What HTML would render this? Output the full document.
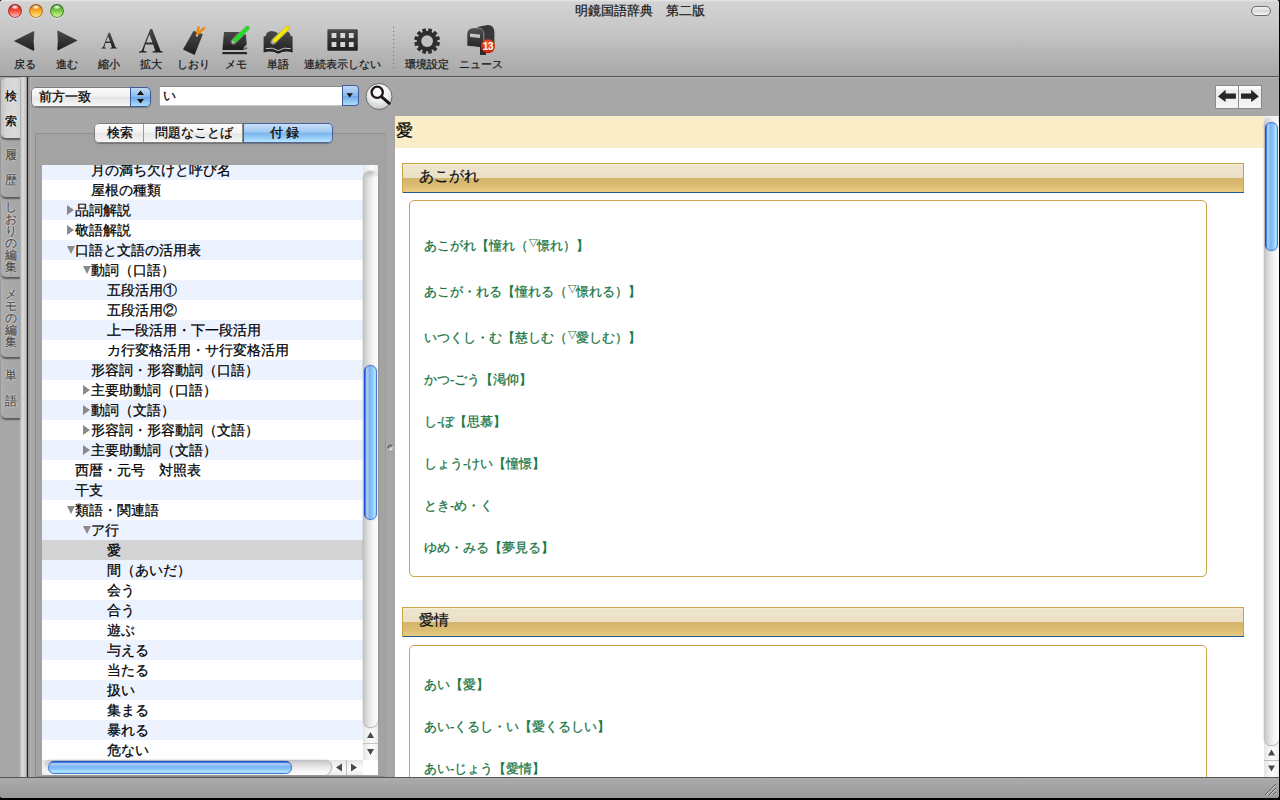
<!DOCTYPE html>
<html><head><meta charset="utf-8">
<style>
*{margin:0;padding:0;box-sizing:border-box}
html,body{width:1280px;height:800px;overflow:hidden;background:#000}
body{position:relative;font-family:"Liberation Sans",sans-serif;color:#000;-webkit-text-stroke:0.25px currentColor}
.a{position:absolute}
#win{position:absolute;left:0;top:0;width:1279px;height:798px;background:#a7a7a7;overflow:hidden;border-radius:3px 3px 3px 3px}
#tb{left:0;top:0;width:1279px;height:76px;background:linear-gradient(#e8e8e8 0px,#d3d3d3 2px,#c7c7c7 30px,#b5b5b5 55px,#a8a8a8 76px)}
#tbline{left:0;top:76px;width:1279px;height:1px;background:#525252}
#title{left:0;top:3px;width:1279px;text-align:center;font-size:13px;line-height:16px;color:#1a1a1a}
.light{width:14px;height:14px;border-radius:50%}
.tlab{top:57px;font-size:11px;line-height:14px;color:#1a1a1a;white-space:nowrap}
#bot{left:0;top:777px;width:1279px;height:21px;background:linear-gradient(#545454 0,#545454 1px,#ababab 1px,#9a9a9a 21px)}
.vt{left:1px;font-size:12px;line-height:12.1px;color:#4a4a4a;text-shadow:0 0 1px #e4e4e4,0 0 1px #e4e4e4,0 0 2px #dcdcdc,0 0 2px #dcdcdc;width:19px;text-align:center}
.tab{position:absolute;left:1px;width:19px;border-radius:5px 0 0 5px;background:linear-gradient(90deg,#b0b0b0,#a9a9a9 20%,#a6a6a6);box-shadow:0 1.5px 1.5px rgba(0,0,0,.45)}
.row{position:absolute;left:0;width:321px;height:20px;font-size:14px;line-height:20px;white-space:nowrap}
.b{background:#edf3fe}
.tri{position:absolute;top:5px;width:0;height:0}
.ent{position:absolute;left:14px;font-size:13px;line-height:18px;color:#16743f;white-space:nowrap;margin-top:-1px}
.ent sup{font-size:10.5px;vertical-align:4px;line-height:0;-webkit-text-stroke:0;margin:0 0.5px}
.shdr{position:absolute;left:7px;width:842px;height:30px;border:1px solid #c9a347;border-bottom:none;
 background:linear-gradient(#f6eed0 0,#f6eed0 1px,#efe5cf 1px,#ebdfc5 14px,#d3b46c 14px,#dcbd72 22px,#e9cb83 28px);}
.shdr::after{content:"";position:absolute;left:0;right:-1px;bottom:0;height:1px;background:#1c5796}
.shdr span{position:absolute;left:16px;top:3px;font-size:15px;line-height:18px;color:#111}
.box{position:absolute;left:14px;width:798px;border:1px solid #c9a347;border-radius:5px;background:#fff}
.row span{position:absolute;top:0}
.sel{background:#d4d4d4}
.tr{position:absolute;top:5px;width:0;height:0;border-left:7.5px solid #8a8a8a;border-top:5px solid transparent;border-bottom:5px solid transparent}
.td{position:absolute;top:5.5px;width:0;height:0;border-top:8.5px solid #8a8a8a;border-left:4.5px solid transparent;border-right:4.5px solid transparent}
</style></head><body>
<div id="win">
 <div class="a" id="tb"></div>
 <div class="a" id="tbline"></div>
 <div class="a" id="title">明鏡国語辞典　第二版</div>
 <!-- traffic lights -->
 <div class="a light" style="left:8px;top:4px;background:radial-gradient(ellipse 4px 2.5px at 50% 22%,#fff 0,rgba(255,255,255,.6) 50%,rgba(255,255,255,0) 100%),linear-gradient(#b83024 0%,#ee3a2c 38%,#fb6a60 62%,#ffb0b0 88%,#ffc4c4 100%);box-shadow:inset 0 0 0 1px rgba(120,30,30,.75),0 1px 0 rgba(255,255,255,.5)"></div>
 <div class="a light" style="left:29px;top:4px;background:radial-gradient(ellipse 4px 2.5px at 50% 22%,#fff 0,rgba(255,255,255,.6) 50%,rgba(255,255,255,0) 100%),linear-gradient(#c0640c 0%,#f49a18 38%,#fbbc40 62%,#ffe088 88%,#fff0b0 100%);box-shadow:inset 0 0 0 1px rgba(140,80,20,.75),0 1px 0 rgba(255,255,255,.5)"></div>
 <div class="a light" style="left:50px;top:4px;background:radial-gradient(ellipse 4px 2.5px at 50% 22%,#fff 0,rgba(255,255,255,.6) 50%,rgba(255,255,255,0) 100%),linear-gradient(#3c8a1e 0%,#6cbc3c 38%,#94d860 62%,#c8f098 88%,#e0f8c0 100%);box-shadow:inset 0 0 0 1px rgba(40,90,30,.75),0 1px 0 rgba(255,255,255,.5)"></div>
 <!-- pill -->
 <div class="a" style="left:1251px;top:6px;width:20px;height:10px;border:1px solid #6c6c6c;border-radius:5px;background:linear-gradient(#f5f5f5,#d8d8d8 50%,#f4f4f4)"></div>

 <svg class="a" style="left:0;top:0" width="520" height="76" viewBox="0 0 520 76">
  <defs>
   <linearGradient id="dk" x1="0" y1="0" x2="0" y2="1"><stop offset="0" stop-color="#4a4a4a"/><stop offset="1" stop-color="#1e1e1e"/></linearGradient>
   <linearGradient id="dk2" x1="0" y1="0" x2="0" y2="1"><stop offset="0" stop-color="#505050"/><stop offset="1" stop-color="#262626"/></linearGradient>
   <radialGradient id="badge" cx="0.5" cy="0.35" r="0.6"><stop offset="0" stop-color="#f26a3a"/><stop offset="1" stop-color="#c81e08"/></radialGradient>
  </defs>
  <!-- back -->
  <path d="M13.5 41 L33 31.2 Q34.5 30.6 34.4 32.2 Q33.2 41 34.4 49.8 Q34.5 51.4 33 50.8 Z" fill="url(#dk)" stroke="#f0f0f0" stroke-opacity="0.35" stroke-width="0.6"/>
  <!-- fwd -->
  <path d="M78 40.5 L58.5 30.7 Q57 30.1 57.1 31.7 Q58.3 40.5 57.1 49.3 Q57 50.9 58.5 50.3 Z" fill="url(#dk)" stroke="#f0f0f0" stroke-opacity="0.35" stroke-width="0.6"/>
  <!-- A small / large -->
  <path id="bigA" fill-rule="evenodd" fill="url(#dk)" d="M150.2 29 L152.2 29 L160.6 51.1 Q162.8 51.3 162.8 52.1 L162.8 52.6 L152.4 52.6 L152.4 52.1 Q152.4 51.3 155.2 51.1 L153.2 44.6 L145.4 44.6 L143.6 51.1 Q146.6 51.3 146.6 52.1 L146.6 52.6 L139 52.6 L139 52.1 Q139 51.3 141.6 51.1 Z M149.4 34.6 L152.5 42.4 L146.2 42.4 Z"/>
  <use href="#bigA" transform="translate(101.2 32.7) scale(0.665) translate(-139 -29)"/>
  <!-- bookmark -->
  <path d="M193.6 30.7 L202.8 34.2 L194.6 55 L183 49.4 Z" fill="url(#dk)"/>
  <circle cx="197" cy="35.6" r="1.1" fill="#d8d8d8"/>
  <path d="M198.7 26.4 L197.4 34 L204.9 27.6" fill="none" stroke="#f08a14" stroke-width="2.6" stroke-linejoin="round"/>
  <!-- memo -->
  <path d="M224 32 L240 32 L246 34.8 L247 50 L222.4 50 Z" fill="url(#dk)"/>
  <path d="M243 50 Q244 45.5 247 44.5 L247.2 50 Z" fill="#a8a8a8"/>
  <path d="M243 50 Q245 48 247.2 48" fill="none" stroke="#2a2a2a" stroke-width="0.8"/>
  <rect x="222.4" y="52" width="24.6" height="2.2" fill="#262626"/>
  <path d="M233.58 41.64 L247.19 28.20" stroke="#a8a8a8" stroke-opacity="0.6" stroke-width="5.7" stroke-linecap="round"/><path d="M231.80 43.40 L235.30 42.68 L232.56 39.90 Z" fill="#bdbdbd"/><path d="M235.30 42.68 L247.70 30.43 L244.96 27.66 L232.56 39.90 Z" fill="#1ee01e"/><circle cx="247.33" cy="28.06" r="2.05" fill="#22d822"/>
  <!-- book -->
  <path d="M263.6 36.5 L265.8 36 Q266 31.5 271.5 31 Q276 31 278.2 33.5 Q280.5 31 285 31 Q290.5 31.5 290.6 36 L292.6 36.5 L292.6 52.6 Q285 49.8 278.2 53.7 Q271.4 49.8 263.6 52.6 Z" fill="url(#dk)"/>
  <path d="M265.8 48.6 Q272.5 46.8 278.2 50.6 Q284 46.8 290.6 48.6" fill="none" stroke="#c4c4c4" stroke-width="1"/>
  <path d="M273.19 41.86 L287.48 28.00" stroke="#a8a8a8" stroke-opacity="0.6" stroke-width="5.7" stroke-linecap="round"/><path d="M271.40 43.60 L274.91 42.91 L272.20 40.11 Z" fill="#bdbdbd"/><path d="M274.91 42.91 L287.98 30.23 L285.26 27.43 L272.20 40.11 Z" fill="#f4e800"/><circle cx="287.63" cy="27.86" r="2.05" fill="#eede00"/>
  <!-- grid -->
  <rect x="327.4" y="29.2" width="30.4" height="21.6" rx="1" fill="url(#dk)"/>
  <g fill="#d6d6d6">
   <rect x="331.6" y="33" width="4.8" height="5"/><rect x="340.3" y="33" width="4.8" height="5"/><rect x="348.9" y="33" width="4.8" height="5"/>
   <rect x="331.6" y="42" width="4.8" height="5"/><rect x="340.3" y="42" width="4.8" height="5"/><rect x="348.9" y="42" width="4.8" height="5"/>
  </g>
  <!-- separator -->
  <line x1="393.6" y1="27" x2="393.6" y2="70" stroke="#6a6a6a" stroke-width="1" stroke-dasharray="1 3"/>
  <!-- gear -->
  <g transform="translate(427.1 41.1)" fill="#2e2e2e">
   <circle r="10.2"/>
   <g id="teeth">
    <rect x="-1.9" y="-12.9" width="3.8" height="4" transform="rotate(15)"/>
    <rect x="-1.9" y="-12.9" width="3.8" height="4" transform="rotate(45)"/>
    <rect x="-1.9" y="-12.9" width="3.8" height="4" transform="rotate(75)"/>
    <rect x="-1.9" y="-12.9" width="3.8" height="4" transform="rotate(105)"/>
    <rect x="-1.9" y="-12.9" width="3.8" height="4" transform="rotate(135)"/>
    <rect x="-1.9" y="-12.9" width="3.8" height="4" transform="rotate(165)"/>
    <rect x="-1.9" y="-12.9" width="3.8" height="4" transform="rotate(195)"/>
    <rect x="-1.9" y="-12.9" width="3.8" height="4" transform="rotate(225)"/>
    <rect x="-1.9" y="-12.9" width="3.8" height="4" transform="rotate(255)"/>
    <rect x="-1.9" y="-12.9" width="3.8" height="4" transform="rotate(285)"/>
    <rect x="-1.9" y="-12.9" width="3.8" height="4" transform="rotate(315)"/>
    <rect x="-1.9" y="-12.9" width="3.8" height="4" transform="rotate(345)"/>
   </g>
   <circle r="5.9" fill="#c2c2c2"/>
  </g>
  <!-- mailbox -->
  <path d="M477 27 L487.5 25 Q494.4 24.8 494.4 32.5 L494.4 45.5 L483 47.6 Z" fill="#383838"/>
  <path d="M467.3 45.8 L467.3 34 Q467.3 28.2 474.8 28 Q482.6 28 482.8 34 L482.8 47.6 Z" fill="url(#dk2)"/>
  <path d="M476.5 27.6 Q483.6 27.8 483.9 34 L483.9 47.4" fill="none" stroke="#9c9c9c" stroke-width="0.9"/>
  <path d="M467.6 46.2 L482.6 47.9" stroke="#b4b4b4" stroke-width="0.8"/>
  <path d="M470 33.6 L480 34.6 L480 37.9 L470 36.9 Z" fill="#c4c4c4"/>
  <rect x="480" y="47" width="6" height="8" fill="#2a2a2a"/>
  <circle cx="488" cy="46.2" r="7" fill="url(#badge)"/>
  <text x="488" y="50" text-anchor="middle" font-family="Liberation Sans" font-weight="bold" font-size="10" fill="#fff" letter-spacing="-0.3" style="-webkit-text-stroke:0.2px #fff">13</text>
 </svg>
 <div class="a tlab" style="left:24.5px;transform:translateX(-50%)">戻る</div>
 <div class="a tlab" style="left:66.5px;transform:translateX(-50%)">進む</div>
 <div class="a tlab" style="left:109px;transform:translateX(-50%)">縮小</div>
 <div class="a tlab" style="left:150.7px;transform:translateX(-50%)">拡大</div>
 <div class="a tlab" style="left:193.4px;transform:translateX(-50%)">しおり</div>
 <div class="a tlab" style="left:236px;transform:translateX(-50%)">メモ</div>
 <div class="a tlab" style="left:278px;transform:translateX(-50%)">単語</div>
 <div class="a tlab" style="left:342px;transform:translateX(-50%)">連続表示しない</div>
 <div class="a tlab" style="left:427px;transform:translateX(-50%)">環境設定</div>
 <div class="a tlab" style="left:481px;transform:translateX(-50%)">ニュース</div>

 <!-- body -->
 <!-- vertical tabs -->
 <div class="a" style="left:20px;top:77px;width:7px;height:700px;background:linear-gradient(90deg,#bdbdbd,#dcdcdc 40%,#c4c4c4 80%,#8a8a8a)"></div>
 <div class="a" style="left:27px;top:77px;width:1px;height:700px;background:#1e1e1e"></div>
 <div class="a" style="left:28px;top:77px;width:2px;height:700px;background:#9c9c9c"></div>
 <div class="a" style="left:30px;top:77px;width:1px;height:700px;background:#b4b4b4"></div>
 <!-- tab shapes -->
 <div class="tab" style="top:358px;height:60px"></div>
 <div class="tab" style="top:278px;height:79px"></div>
 <div class="tab" style="top:198px;height:79px"></div>
 <div class="tab" style="top:138px;height:59px"></div>
 <div class="tab" style="top:78px;height:60px;border-radius:5px 0 0 5px;background:linear-gradient(90deg,#c4c4c4,#d6d6d6 30%,#dadada 70%,#d2d2d2)"></div>
 <div class="a vt" style="top:84px;color:#000;text-shadow:0 0 1px #fff,0 0 2px #fff,0 0 2px #fff;line-height:25px">検<br>索</div>
 <div class="a vt" style="top:142.5px;line-height:25.5px">履<br>歴</div>
 <div class="a vt" style="top:201px">し<br>お<br>り<br>の<br>編<br>集</div>
 <div class="a vt" style="top:287.8px">メ<br>モ<br>の<br>編<br>集</div>
 <div class="a vt" style="top:362px;line-height:26px">単<br>語</div>

 <!-- search row -->
 <div class="a" style="left:31px;top:87px;width:120px;height:20px;border-radius:5px;background:linear-gradient(#fdfdfd,#f1f1f1 45%,#e4e4e4 55%,#fafafa);box-shadow:0 0 0 1px #7c7c7c inset,0 1px 1px rgba(0,0,0,.25)"></div>
 <div class="a" style="left:130px;top:87px;width:21px;height:20px;border-radius:0 5px 5px 0;background:linear-gradient(#c8def6,#88b8ea 50%,#6aa6e6 52%,#b8e4ff);box-shadow:0 0 0 1px #3e5c9a inset"></div>
 <svg class="a" style="left:130px;top:87px" width="21" height="20"><path d="M7 8 L10.5 3.5 L14 8 Z M7 12 L14 12 L10.5 16.5 Z" fill="#111"/></svg>
 <div class="a" style="left:39px;top:88px;font-size:13px;line-height:18px">前方一致</div>

 <div class="a" style="left:159px;top:86px;width:184px;height:20px;background:#fff;box-shadow:inset 0 1px 0 #8a8a8a,inset 1px 0 0 #b0b0b0,inset 0 -1px 0 #c8c8c8"></div>
 <div class="a" style="left:342px;top:85px;width:17px;height:21px;border-radius:0 4px 4px 0;background:linear-gradient(#c8def6,#88b8ea 50%,#6aa6e6 52%,#b8e4ff);box-shadow:0 0 0 1px #3e5c9a inset"></div>
 <svg class="a" style="left:342px;top:85px" width="17" height="21"><path d="M4.6 8.2 L10.8 8.2 L7.7 12.5 Z" fill="#111"/></svg>
 <div class="a" style="left:163px;top:87px;font-size:13px;line-height:18px">い</div>
 <svg class="a" style="left:364px;top:82px" width="30" height="30">
  <defs><radialGradient id="sb" cx="0.5" cy="0.3" r="0.7"><stop offset="0" stop-color="#ffffff"/><stop offset="0.6" stop-color="#ececec"/><stop offset="1" stop-color="#c8c8c8"/></radialGradient></defs>
  <circle cx="15" cy="14.5" r="13" fill="url(#sb)" stroke="#6a6a6a" stroke-width="1"/>
  <circle cx="13.2" cy="10.3" r="5.6" fill="none" stroke="#1e1414" stroke-width="2.3"/>
  <path d="M17.4 14.6 L25.2 21.3" stroke="#1e1414" stroke-width="2.9" stroke-linecap="round"/>
 </svg>

 <!-- group box -->
 <div class="a" style="left:35px;top:133px;width:351px;height:644px;border:1px solid #8e8e8e;border-right-color:#999;border-radius:2px;background:#a3a3a3"></div>
 <!-- segmented -->
 <div class="a" style="left:94px;top:123px;width:239px;height:20px;border-radius:5px;background:linear-gradient(#fefefe,#f3f3f3 45%,#e6e6e6 55%,#f8f8f8);box-shadow:0 0 0 1px #808080 inset,0 1px 1px rgba(0,0,0,.3)"></div>
 <div class="a" style="left:243px;top:123px;width:90px;height:20px;border-radius:0 5px 5px 0;background:linear-gradient(#cfe4f8,#9ec8f2 45%,#7ab6ee 52%,#a8d8fc 85%,#c4ecff);box-shadow:0 0 0 1px #4a62a0 inset"></div>
 <div class="a" style="left:143px;top:124px;width:1px;height:18px;background:#9a9a9a"></div>
 <div class="a" style="left:242px;top:124px;width:1px;height:18px;background:#8a8a8a"></div>
 <div class="a" style="left:107px;top:124px;font-size:13px;line-height:18px">検索</div>
 <div class="a" style="left:155px;top:124px;font-size:13px;line-height:18px">問題なことば</div>
 <div class="a" style="left:270px;top:124px;font-size:13px;line-height:18px;letter-spacing:3px">付録</div>

 <!-- list -->
 <div class="a" id="list" style="left:42px;top:165px;width:336px;height:610px;background:#fff;overflow:hidden">
  <div class="a" style="left:0;top:-5px;width:321px;height:620px" id="rows">
<div class="row b" style="top:0px"><span style="left:49px">月の満ち欠けと呼び名</span></div>
<div class="row" style="top:20px"><span style="left:49px">屋根の種類</span></div>
<div class="row b" style="top:40px"><i class="tr" style="left:25px"></i><span style="left:33px">品詞解説</span></div>
<div class="row" style="top:60px"><i class="tr" style="left:25px"></i><span style="left:33px">敬語解説</span></div>
<div class="row b" style="top:80px"><i class="td" style="left:25px"></i><span style="left:33px">口語と文語の活用表</span></div>
<div class="row" style="top:100px"><i class="td" style="left:41px"></i><span style="left:49px">動詞（口語）</span></div>
<div class="row b" style="top:120px"><span style="left:65px">五段活用①</span></div>
<div class="row" style="top:140px"><span style="left:65px">五段活用②</span></div>
<div class="row b" style="top:160px"><span style="left:65px">上一段活用・下一段活用</span></div>
<div class="row" style="top:180px"><span style="left:65px">カ行変格活用・サ行変格活用</span></div>
<div class="row b" style="top:200px"><span style="left:49px">形容詞・形容動詞（口語）</span></div>
<div class="row" style="top:220px"><i class="tr" style="left:41px"></i><span style="left:49px">主要助動詞（口語）</span></div>
<div class="row b" style="top:240px"><i class="tr" style="left:41px"></i><span style="left:49px">動詞（文語）</span></div>
<div class="row" style="top:260px"><i class="tr" style="left:41px"></i><span style="left:49px">形容詞・形容動詞（文語）</span></div>
<div class="row b" style="top:280px"><i class="tr" style="left:41px"></i><span style="left:49px">主要助動詞（文語）</span></div>
<div class="row" style="top:300px"><span style="left:33px">西暦・元号　対照表</span></div>
<div class="row b" style="top:320px"><span style="left:33px">干支</span></div>
<div class="row" style="top:340px"><i class="td" style="left:25px"></i><span style="left:33px">類語・関連語</span></div>
<div class="row b" style="top:360px"><i class="td" style="left:41px"></i><span style="left:49px">ア行</span></div>
<div class="row sel" style="top:380px"><span style="left:65px">愛</span></div>
<div class="row b" style="top:400px"><span style="left:65px">間（あいだ）</span></div>
<div class="row" style="top:420px"><span style="left:65px">会う</span></div>
<div class="row b" style="top:440px"><span style="left:65px">合う</span></div>
<div class="row" style="top:460px"><span style="left:65px">遊ぶ</span></div>
<div class="row b" style="top:480px"><span style="left:65px">与える</span></div>
<div class="row" style="top:500px"><span style="left:65px">当たる</span></div>
<div class="row b" style="top:520px"><span style="left:65px">扱い</span></div>
<div class="row" style="top:540px"><span style="left:65px">集まる</span></div>
<div class="row b" style="top:560px"><span style="left:65px">暴れる</span></div>
<div class="row" style="top:580px"><span style="left:65px">危ない</span></div>

</div>
 </div>

 <!-- content -->
 <div class="a" id="content" style="left:395px;top:116px;width:869px;height:661px;background:#fff;overflow:hidden">
  <div class="a" style="left:0;top:0;width:869px;height:32px;background:#faeec8"></div>
  <div class="a" style="left:1px;top:2.5px;font-size:17px;line-height:24px;color:#000">愛</div>
  <div class="shdr" style="top:47px"><span>あこがれ</span></div>
  <div class="box" style="top:84px;height:377px">
   <div class="ent" style="top:37.0px">あこがれ【憧れ（<sup>▽</sup>憬れ）】</div>
   <div class="ent" style="top:83.0px">あこが・れる【憧れる（<sup>▽</sup>憬れる）】</div>
   <div class="ent" style="top:129.0px">いつくし・む【慈しむ（<sup>▽</sup>愛しむ）】</div>
   <div class="ent" style="top:171.0px">かつ-ごう【渇仰】</div>
   <div class="ent" style="top:213.0px">し-ぼ【思慕】</div>
   <div class="ent" style="top:255.0px">しょう-けい【憧憬】</div>
   <div class="ent" style="top:297.0px">とき-め・く</div>
   <div class="ent" style="top:339.0px">ゆめ・みる【夢見る】</div>
  </div>
  <div class="shdr" style="top:491px"><span>愛情</span></div>
  <div class="box" style="top:529px;height:300px">
   <div class="ent" style="top:30.5px">あい【愛】</div>
   <div class="ent" style="top:72.5px">あい-くるし・い【愛くるしい】</div>
   <div class="ent" style="top:114.5px">あい-じょう【愛情】</div>
  </div>
 </div>
 <!-- content scrollbar -->
 <div class="a" style="left:1264px;top:116px;width:15px;height:661px;background:linear-gradient(90deg,#e4e4e4,#f6f6f6 40%,#fbfbfb 60%,#ececec)"></div><div class="a" style="left:1264px;top:117px;width:15px;height:628px;border-radius:7.5px;background:linear-gradient(90deg,#bebebe,#cdcdcd 12%,#e4e4e4 40%,#f6f6f6 72%,#fcfcfc 100%);box-shadow:0 1px 1.5px rgba(0,0,0,.35)"></div>
 <div class="a" style="left:1265px;top:122px;width:13px;height:129px;border-radius:6.5px;background:linear-gradient(90deg,#1c58dc 0,#2a66e0 10%,#a6c6f0 16%,#a4c8f2 32%,#78b2f2 40%,#8cc8fc 65%,#b2eaff 85%,#7aa8d8 100%);box-shadow:0 0 1px rgba(0,0,0,.5),inset 0 0 0 1px rgba(24,70,200,.55)"></div>
 
 <div class="a" style="left:1264px;top:760px;width:15px;height:1px;background:#bcbcbc"></div>
 <svg class="a" style="left:1264px;top:748px" width="15" height="29"><path d="M4 7.5 L11 7.5 L7.5 1.5 Z M4 17.5 L11 17.5 L7.5 23.5 Z" fill="#4a4a4a"/></svg>
 <!-- nav buttons -->
 <div class="a" style="left:1215px;top:85px;width:47px;height:24px;background:#8a8a8a;border-radius:1px"></div>
 <div class="a" style="left:1216px;top:86px;width:22px;height:22px;background:linear-gradient(#fdfdfd,#fafafa 10%,#ececec 20%,#f2f2f2 80%,#f8f8f8)"></div>
 <div class="a" style="left:1239px;top:86px;width:22px;height:22px;background:linear-gradient(#fdfdfd,#fafafa 10%,#ececec 20%,#f2f2f2 80%,#f8f8f8)"></div>
 <svg class="a" style="left:1215px;top:85px" width="47" height="24">
  <path d="M3 11.5 L10.6 4.8 L10.6 8.4 L20.9 8.4 L20.9 13.7 L10.6 13.7 L10.6 17 Z" fill="#262626"/>
  <path d="M43.8 11.5 L36.2 4.8 L36.2 8.4 L26 8.4 L26 13.7 L36.2 13.7 L36.2 17 Z" fill="#262626"/>
 </svg>
 <!-- list scrollbars -->
 <div class="a" style="left:363px;top:165px;width:15px;height:595px;background:linear-gradient(90deg,#e4e4e4,#f6f6f6 40%,#fbfbfb 60%,#ececec)"></div><div class="a" style="left:363px;top:171px;width:15px;height:556px;border-radius:7.5px;background:radial-gradient(ellipse 9px 8px at 50% 0,rgba(0,0,0,.2),rgba(0,0,0,0) 100%),linear-gradient(90deg,#bebebe,#cdcdcd 12%,#e4e4e4 40%,#f6f6f6 72%,#fcfcfc 100%);box-shadow:0 1px 1.5px rgba(0,0,0,.35),0 -1px 1px rgba(0,0,0,.12)"></div>
 <div class="a" style="left:364px;top:365px;width:13px;height:155px;border-radius:6.5px;background:linear-gradient(90deg,#1c58dc 0,#2a66e0 10%,#a6c6f0 16%,#a4c8f2 32%,#78b2f2 40%,#8cc8fc 65%,#b2eaff 85%,#7aa8d8 100%);box-shadow:0 0 1px rgba(0,0,0,.5),inset 0 0 0 1px rgba(24,70,200,.55)"></div>
 
 <div class="a" style="left:363px;top:743px;width:15px;height:1px;background:#c4c4c4"></div>
 <svg class="a" style="left:363px;top:728px" width="15" height="32"><path d="M4 10 L11 10 L7.5 4 Z M4 21 L11 21 L7.5 27 Z" fill="#4a4a4a"/></svg>
 <div class="a" style="left:42px;top:760px;width:321px;height:15px;background:linear-gradient(#e4e4e4,#f6f6f6 40%,#fbfbfb 60%,#ececec)"></div><div class="a" style="left:43px;top:760px;width:288px;height:15px;border-radius:7.5px;background:linear-gradient(#bebebe,#cdcdcd 12%,#e4e4e4 40%,#f6f6f6 72%,#fcfcfc 100%);box-shadow:1px 0 1.5px rgba(0,0,0,.35)"></div>
 <div class="a" style="left:48px;top:761px;width:244px;height:13px;border-radius:6.5px;background:linear-gradient(#1c58dc 0,#2a66e0 10%,#a6c6f0 16%,#a4c8f2 32%,#78b2f2 40%,#8cc8fc 65%,#b2eaff 85%,#7aa8d8 100%);box-shadow:0 0 1px rgba(0,0,0,.5),inset 0 0 0 1px rgba(24,70,200,.55)"></div>
 
 <div class="a" style="left:346px;top:760px;width:1px;height:15px;background:#bcbcbc"></div>
 <svg class="a" style="left:331px;top:760px" width="32" height="15"><path d="M11 3.5 L11 11.5 L5 7.5 Z M20 3.5 L20 11.5 L26 7.5 Z" fill="#4a4a4a"/></svg>
 <div class="a" style="left:363px;top:760px;width:15px;height:15px;background:#fff"></div>

 <div class="a" style="left:31px;top:77px;width:1248px;height:1px;background:#b3b3b3"></div>
 <svg class="a" style="left:387px;top:444px" width="7" height="7"><path d="M1.2 4.2 A2.3 2.3 0 0 1 5 2" stroke="#555" stroke-width="1.2" fill="none"/><path d="M5.2 3.2 A2.3 2.3 0 0 1 2.2 5.4" stroke="#e8e8e8" stroke-width="1.4" fill="none"/></svg>
 <div class="a" id="bot"></div>
 <svg class="a" style="left:1262px;top:781px" width="16" height="16">
  <g stroke-width="1">
   <path d="M3 14 L14 3" stroke="#5a5a5a"/><path d="M4 14 L14 4" stroke="#d0d0d0"/>
   <path d="M7 14 L14 7" stroke="#5a5a5a"/><path d="M8 14 L14 8" stroke="#d0d0d0"/>
   <path d="M11 14 L14 11" stroke="#5a5a5a"/><path d="M12 14 L14 12" stroke="#d0d0d0"/>
  </g>
 </svg>
</div>
</body></html>
